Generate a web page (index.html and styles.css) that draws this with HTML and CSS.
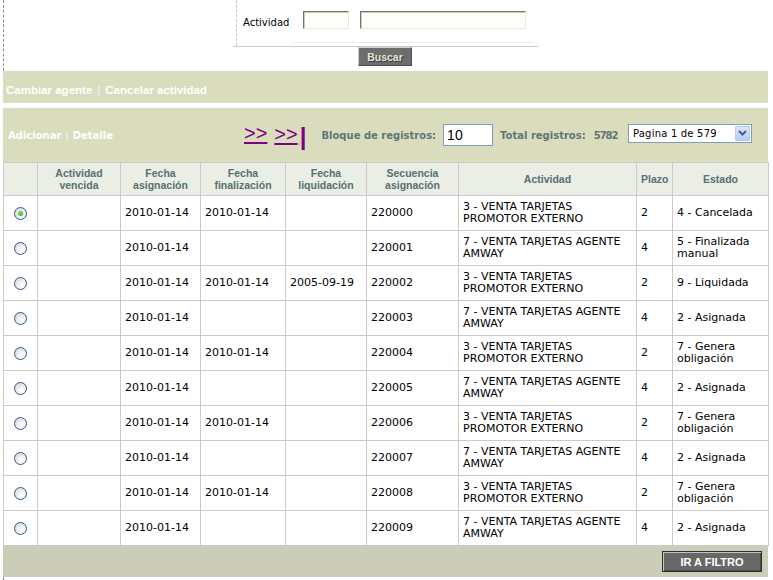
FILE: index.html
```html
<!DOCTYPE html>
<html lang="es">
<head>
<meta charset="utf-8">
<title>Actividades</title>
<link rel="stylesheet" href="styles.css">
</head>
<body>
<div class="page">
  <div class="top">
    <div class="filter">
      <div class="filter-cell">
        <div class="filter-row">
          <span class="filter-label">Actividad</span>
          <input class="field field-code" type="text">
          <input class="field field-name" type="text">
        </div>
        <div class="filter-rule"></div>
      </div>
    </div>
    <div class="search-row"><span class="btn-search">Buscar</span></div>
  </div>

  <div class="band actions">
    <a class="act-link">Cambiar agente</a><span class="sep">|</span><a class="act-link">Cancelar actividad</a>
  </div>

  <div class="band toolbar">
    <div class="tb-links"><a class="tb-link">Adicionar</a><span class="sep">|</span><a class="tb-link">Detalle</a></div>
    <div class="nav"><a class="nav-link">&gt;&gt;</a><a class="nav-link nav-last">&gt;&gt;<span class="nav-bar">|</span></a></div>
    <span class="tb-label lbl-block">Bloque de registros:</span>
    <input class="block-input" type="text" value="10">
    <span class="tb-label lbl-total">Total registros:</span>
    <span class="tb-label lbl-count">5782</span>
    <div class="select"><span class="select-text">Pagina 1 de 579</span><span class="select-btn"><svg width="9" height="6" viewBox="0 0 9 6"><polyline points="1,1 4.5,4.5 8,1" fill="none" stroke="#4a5d85" stroke-width="2"/></svg></span></div>
  </div>

  <table class="grid">
    <colgroup>
      <col class="c-radio"><col class="c-venc"><col class="c-asig"><col class="c-fin"><col class="c-liq"><col class="c-sec"><col class="c-act"><col class="c-plazo"><col class="c-estado">
    </colgroup>
    <thead>
      <tr>
        <th></th>
        <th>Actividad<br>vencida</th>
        <th>Fecha<br>asignación</th>
        <th>Fecha<br>finalización</th>
        <th>Fecha<br>liquidación</th>
        <th>Secuencia<br>asignación</th>
        <th>Actividad</th>
        <th>Plazo</th>
        <th>Estado</th>
      </tr>
    </thead>
    <tbody>
      <tr><td class="rc"><span class="radio checked"></span></td><td></td><td>2010-01-14</td><td>2010-01-14</td><td></td><td>220000</td><td>3 - VENTA TARJETAS PROMOTOR EXTERNO</td><td>2</td><td>4 - Cancelada</td></tr>
      <tr><td class="rc"><span class="radio"></span></td><td></td><td>2010-01-14</td><td></td><td></td><td>220001</td><td>7 - VENTA TARJETAS AGENTE AMWAY</td><td>4</td><td>5 - Finalizada manual</td></tr>
      <tr><td class="rc"><span class="radio"></span></td><td></td><td>2010-01-14</td><td>2010-01-14</td><td>2005-09-19</td><td>220002</td><td>3 - VENTA TARJETAS PROMOTOR EXTERNO</td><td>2</td><td>9 - Liquidada</td></tr>
      <tr><td class="rc"><span class="radio"></span></td><td></td><td>2010-01-14</td><td></td><td></td><td>220003</td><td>7 - VENTA TARJETAS AGENTE AMWAY</td><td>4</td><td>2 - Asignada</td></tr>
      <tr><td class="rc"><span class="radio"></span></td><td></td><td>2010-01-14</td><td>2010-01-14</td><td></td><td>220004</td><td>3 - VENTA TARJETAS PROMOTOR EXTERNO</td><td>2</td><td>7 - Genera obligación</td></tr>
      <tr><td class="rc"><span class="radio"></span></td><td></td><td>2010-01-14</td><td></td><td></td><td>220005</td><td>7 - VENTA TARJETAS AGENTE AMWAY</td><td>4</td><td>2 - Asignada</td></tr>
      <tr><td class="rc"><span class="radio"></span></td><td></td><td>2010-01-14</td><td>2010-01-14</td><td></td><td>220006</td><td>3 - VENTA TARJETAS PROMOTOR EXTERNO</td><td>2</td><td>7 - Genera obligación</td></tr>
      <tr><td class="rc"><span class="radio"></span></td><td></td><td>2010-01-14</td><td></td><td></td><td>220007</td><td>7 - VENTA TARJETAS AGENTE AMWAY</td><td>4</td><td>2 - Asignada</td></tr>
      <tr><td class="rc"><span class="radio"></span></td><td></td><td>2010-01-14</td><td>2010-01-14</td><td></td><td>220008</td><td>3 - VENTA TARJETAS PROMOTOR EXTERNO</td><td>2</td><td>7 - Genera obligación</td></tr>
      <tr><td class="rc"><span class="radio"></span></td><td></td><td>2010-01-14</td><td></td><td></td><td>220009</td><td>7 - VENTA TARJETAS AGENTE AMWAY</td><td>4</td><td>2 - Asignada</td></tr>
    </tbody>
  </table>

  <div class="footer"><span class="btn-filter">IR A FILTRO</span></div>
  <div class="tail"></div>
</div>
</body>
</html>
```
FILE: styles.css
```css
* { box-sizing: border-box; }
body {
  margin: 0;
  background: #fff;
  font-family: "DejaVu Sans", Verdana, sans-serif;
  color: #000;
}
.page {
  margin-left: 3px;
  width: 765px;
}
/* ---------- top filter ---------- */
.top {
  height: 71px;
  border-left: 1px dashed #8c8c8c;
}
.filter {
  margin-left: 229px;
  width: 305px;
  height: 47px;
  border-bottom: 1px solid #c9c9c9;
}
.filter-cell {
  margin-left: 3px;
  height: 46px;
  border-left: 1px dashed #c4c4c4;
  padding: 11px 0 0 6px;
}
.filter-row {
  display: flex;
  align-items: center;
  height: 18px;
}
.filter-label {
  font-size: 10px;
  color: #000;
  padding-top: 4px;
}
.field {
  height: 18px;
  margin: 0;
  padding: 0;
  border: 1px solid;
  border-color: #76766a #e9e9dc #e9e9dc #76766a;
  background: #fffff9;
  box-shadow: inset 1px 1px 0 #c9c9bc;
}
.field-code { width: 46px; margin-left: 14px; }
.field-name { width: 166px; margin-left: 11px; }
.filter-rule {
  margin: 13px 0 0 51px;
  width: 239px;
  border-top: 1px solid #f1edd2;
}
.search-row {
  display: flex;
  height: 24px;
  padding-left: 354px;
}
.btn-search {
  display: flex;
  align-items: center;
  justify-content: center;
  width: 54px;
  height: 19px;
  background: #6d6d6d;
  border-top: 1px solid #d2d2d2;
  border-left: 1px solid #d2d2d2;
  border-right: 1px solid #505050;
  border-bottom: 1px solid #505050;
  font-family: "Liberation Sans", Arial, sans-serif;
  font-weight: bold;
  font-size: 10.5px;
  color: #e6e6dc;
  text-shadow: 1px 1px 0 #3a3a3a;
}
/* ---------- bands ---------- */
.band {
  background: #d9ddbd;
  display: flex;
  align-items: center;
}
.actions {
  height: 32px;
  margin-bottom: 5px;
  padding: 5px 0 0 3px;
  font-family: "Liberation Sans", Arial, sans-serif;
  font-weight: bold;
  font-size: 11.5px;
  color: #fff;
}
.act-link { color: #fff; }
.sep {
  color: #f4f5ec;
  font-weight: normal;
  margin: 0 5px;
}
.toolbar {
  height: 54px;
  padding-left: 5px;
  font-size: 10px;
  font-weight: bold;
}
.tb-links {
  width: 236px;
  color: #fff;
}
.tb-link { color: #fff; }
.tb-links .sep { margin: 0 4px; }
.nav {
  display: flex;
  font-family: "Liberation Sans", Arial, sans-serif;
  font-weight: normal;
  font-size: 20px;
  line-height: 20px;
  margin-top: -3px;
}
.nav-link {
  color: #800080;
  text-decoration: underline;
  text-decoration-thickness: 2px;
  text-underline-offset: 2px;
}
.nav-last { margin-left: 7px; }
.nav-bar {
  font-weight: bold;
  font-size: 24px;
  margin-left: 2px;
  position: relative;
  top: 4px;
}
.tb-label { color: #617575; }
.lbl-block { margin-left: 15px; }
.block-input {
  margin: 0 0 0 7px;
  width: 50px;
  height: 22px;
  border: 1px solid #7f9db9;
  padding: 0 0 0 3px;
  font-family: "Liberation Sans", Arial, sans-serif;
  font-size: 14px;
  color: #000;
  background: #fff;
}
.lbl-total { margin-left: 7px; }
.lbl-count { margin-left: 8px; letter-spacing: -1px; }
.select {
  margin: 0 16px 4px auto;
  width: 124px;
  height: 19px;
  border: 1px solid #7f9db9;
  background: #fff;
  display: flex;
  align-items: center;
  justify-content: space-between;
  padding: 0 1px 0 4px;
}
.select-text {
  font-size: 10px;
  font-weight: normal;
  color: #000;
  letter-spacing: 0.2px;
}
.select-btn {
  width: 15px;
  height: 15px;
  border: 1px solid #b6c8ef;
  border-radius: 1px;
  background: linear-gradient(#dbe5fd, #b8cbf6);
  display: flex;
  align-items: center;
  justify-content: center;
}
/* ---------- grid ---------- */
.grid {
  width: 765px;
  table-layout: fixed;
  border-collapse: collapse;
  font-size: 11px;
  line-height: 12px;
}
.c-radio { width: 34px; }
.c-venc { width: 83px; }
.c-asig { width: 80px; }
.c-fin { width: 85px; }
.c-liq { width: 81px; }
.c-sec { width: 92px; }
.c-act { width: 178px; }
.c-plazo { width: 36px; }
.c-estado { width: 96px; }
.grid th, .grid td {
  border: 1px solid #cbcbcb;
  padding: 0 4px;
  vertical-align: middle;
}
.grid th {
  height: 33px;
  background: #ebeee4;
  color: #587070;
  font-family: "Liberation Sans", Arial, sans-serif;
  font-size: 10.5px;
  font-weight: bold;
  text-align: center;
  line-height: 12px;
}
.grid td {
  height: 35px;
  background: #fff;
  text-align: left;
}
.grid td.rc {
  text-align: center;
  padding: 0;
}
.radio {
  display: inline-block;
  width: 13px;
  height: 13px;
  border-radius: 50%;
  border: 1px solid #2f5a8c;
  background: radial-gradient(circle at 65% 70%, #fff 0, #f0f0f0 40%, #cfcfcf 100%);
  vertical-align: middle;
  position: relative;
}
.radio.checked::after {
  content: "";
  position: absolute;
  left: 3px;
  top: 3px;
  width: 5px;
  height: 5px;
  border-radius: 50%;
  background: radial-gradient(circle at 40% 40%, #7fe07f, #24a524);
}
/* ---------- footer ---------- */
.footer {
  height: 31px;
  background: #cbcdb9;
  display: flex;
  justify-content: flex-end;
  padding: 5px 6px 0 0;
}
.btn-filter {
  display: flex;
  align-items: center;
  justify-content: center;
  width: 100px;
  height: 21px;
  background: #686868;
  border: 1px solid #2e2e2e;
  box-shadow: inset 1px 1px 0 #c4c4c4, inset -1px -1px 0 #4a4a4a;
  font-family: "Liberation Sans", Arial, sans-serif;
  font-weight: bold;
  font-size: 11px;
  color: #fff;
}
.tail {
  height: 6px;
  border-left: 1px dashed #8c8c8c;
}
```
